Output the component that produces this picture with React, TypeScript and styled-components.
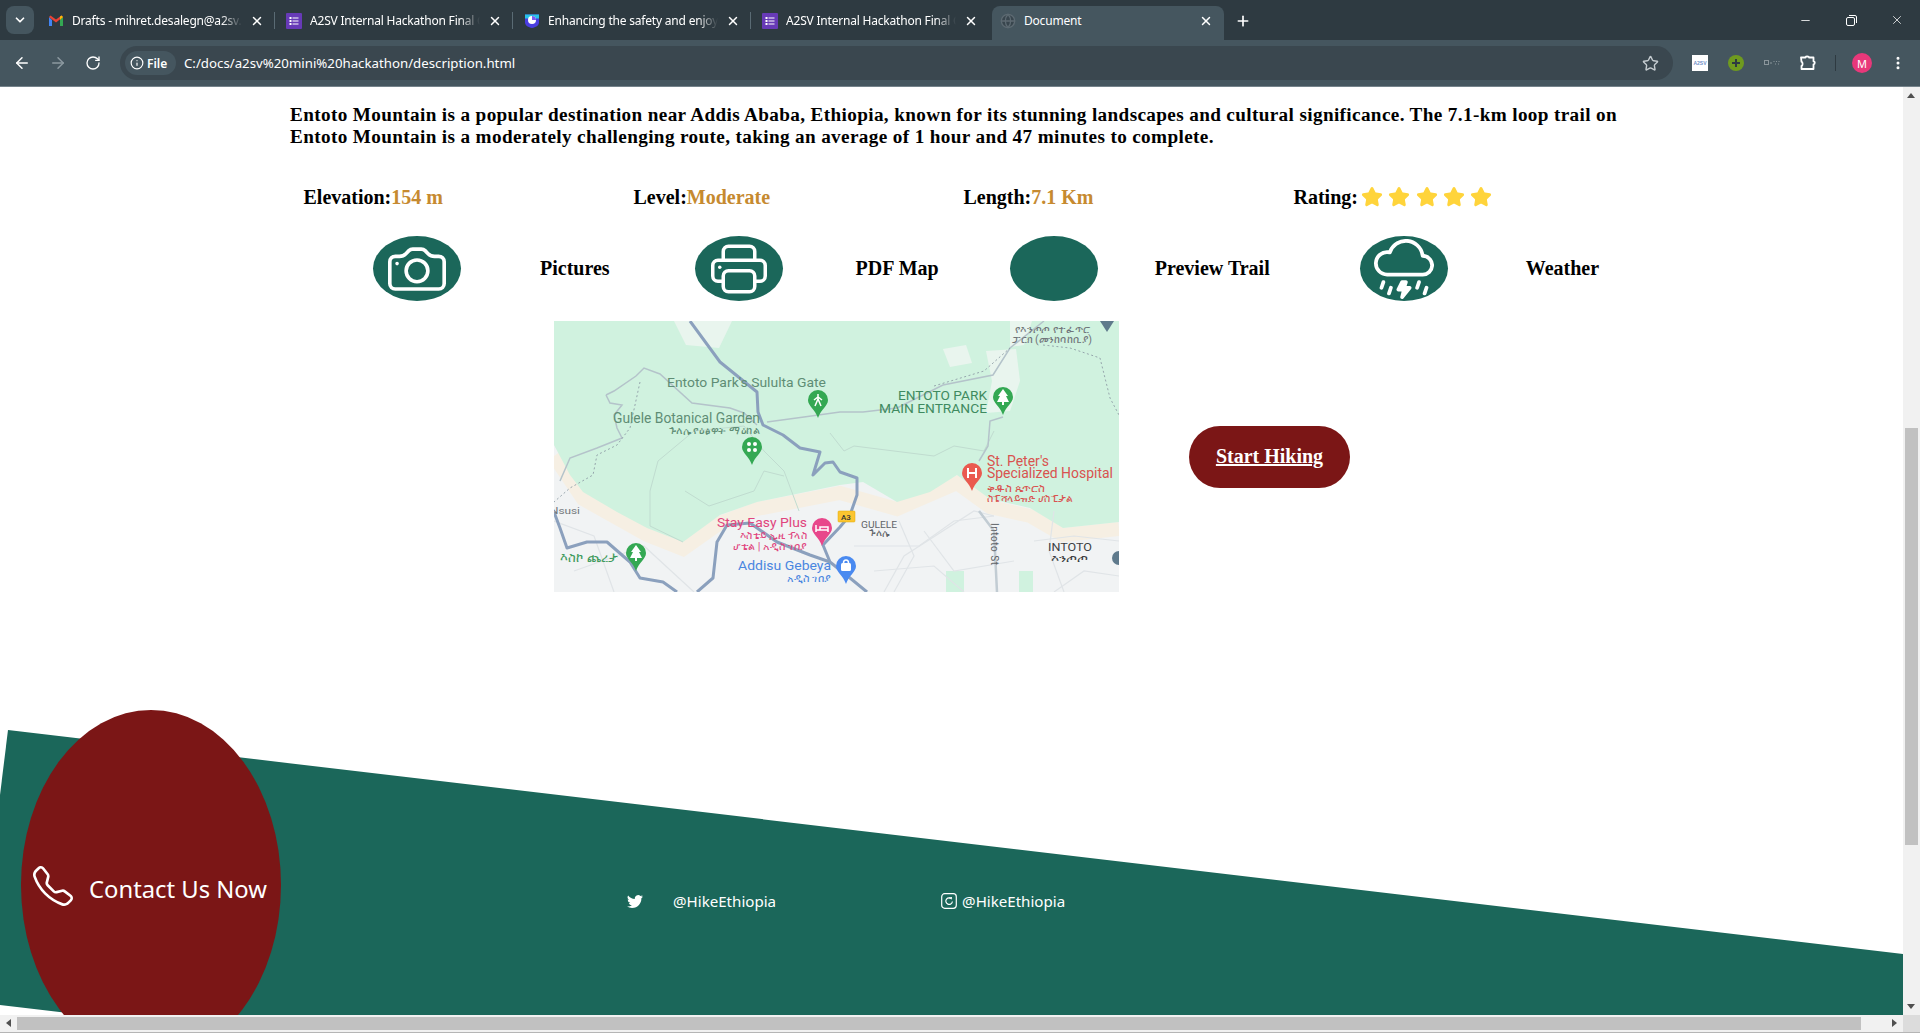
import React from "react";
import styled, { createGlobalStyle } from "styled-components";
import {
  BsCamera,
  BsPrinter,
  BsCloudLightningRain,
  BsTelephone,
  BsTwitter,
} from "react-icons/bs";
import {
  ArrowLeft,
  ArrowRight,
  RotateCw,
  Star,
  X,
  Plus,
  ChevronDown,
  Info,
  EllipsisVertical,
  Minus,
  Globe,
} from "lucide-react";

const Global = createGlobalStyle`
  html, body { margin: 0; padding: 0; height: 100%; overflow: hidden; background: #fff; }
  * { box-sizing: border-box; }
`;

const Window = styled.div`
  width: 1920px;
  height: 1033px;
  display: flex;
  flex-direction: column;
  overflow: hidden;
`;

/* ---------- browser chrome ---------- */
const TabStrip = styled.div`
  height: 40px;
  background: #2e3a41;
  display: flex;
  align-items: flex-end;
  padding-left: 6px;
  color: #fff;
  font: 12px "Noto Sans", sans-serif;
  letter-spacing: -0.2px;
`;
const TabMenu = styled.div`
  width: 28px;
  height: 28px;
  margin-bottom: 6px;
  margin-right: 3px;
  border-radius: 8px;
  background: #45565f;
  display: flex;
  align-items: center;
  justify-content: center;
`;
const Tab = styled.div<{ $active?: boolean; $sep?: boolean }>`
  position: relative;
  width: ${(p) => (p.$active ? 232 : 238)}px;
  height: 34px;
  margin-left: ${(p) => (p.$active ? 3 : 0)}px;
  padding: 0 11px 5px ${(p) => (p.$active ? 8 : 11)}px;
  display: flex;
  align-items: center;
  gap: 8px;
  border-radius: 8px 8px 0 0;
  background: ${(p) => (p.$active ? "#45565f" : "transparent")};
  &::after {
    content: "";
    display: ${(p) => (p.$sep ? "block" : "none")};
    position: absolute;
    right: 0;
    top: 6px;
    height: 17px;
    width: 1px;
    background: #5a6b74;
  }
`;
const TabTitle = styled.span<{ $fade?: boolean }>`
  flex: 1;
  white-space: nowrap;
  overflow: hidden;
  ${(p) =>
    p.$fade &&
    "mask-image: linear-gradient(to right, #000 88%, transparent 100%);"}
`;
const NewTab = styled.div`
  width: 38px;
  height: 34px;
  padding-bottom: 5px;
  display: flex;
  align-items: center;
  justify-content: center;
`;
const WindowControls = styled.div`
  margin-left: auto;
  height: 40px;
  display: flex;
  align-items: center;
`;
const WindowButton = styled.div`
  width: 46px;
  height: 40px;
  display: flex;
  align-items: center;
  justify-content: center;
`;
const Toolbar = styled.div`
  height: 47px;
  background: #45565f;
  border-bottom: 1px solid #75838b;
  display: flex;
  align-items: center;
  color: #fff;
  padding-left: 13px;
  font: 14px "Noto Sans", sans-serif;
`;
const NavButtons = styled.div`
  display: flex;
  align-items: center;
  gap: 18px;
  margin-right: 19px;
`;
const Omnibox = styled.div`
  width: 1553px;
  height: 34px;
  border-radius: 17px;
  background: #3a474f;
  display: flex;
  align-items: center;
  padding: 0 14px 0 5px;
`;
const FileChip = styled.div`
  width: 51px;
  height: 24px;
  border-radius: 12px;
  background: #45565f;
  display: flex;
  align-items: center;
  gap: 3px;
  padding-left: 5px;
  font-size: 12px;
  font-weight: 600;
  margin-right: 8px;
`;
const Url = styled.span`
  flex: 1;
  font-size: 13.25px;
`;
const ToolIcons = styled.div`
  display: flex;
  align-items: center;
  margin-left: 9px;
`;
const Ext = styled.div`
  width: 36px;
  display: flex;
  justify-content: center;
`;
const ExtSquare = styled.div`
  width: 16px;
  height: 16px;
  background: #fff;
  color: #6f8fc7;
  font: 700 5px "Liberation Sans", sans-serif;
  display: flex;
  align-items: center;
  justify-content: center;
`;
const Divider = styled.div`
  width: 1px;
  height: 16px;
  background: #2e3a41;
  margin: 0 16px 0 9px;
`;
const Avatar = styled.div`
  width: 20px;
  height: 20px;
  border-radius: 50%;
  background: #e8387a;
  color: #fff;
  font: 11px "Noto Sans", sans-serif;
  display: flex;
  align-items: center;
  justify-content: center;
  margin-right: 18px;
`;

/* ---------- page ---------- */
const Viewport = styled.div`
  flex: 1;
  display: flex;
  min-height: 0;
`;
const Page = styled.main`
  width: 1903px;
  background: #fff;
  overflow: hidden;
  font-family: "Liberation Serif", serif;
  font-weight: 700;
  color: #000;
`;
const Intro = styled.p`
  margin: 17px 0 0 290px;
  width: 1340px;
  font-size: 19.2px;
  line-height: 22px;
  letter-spacing: 0.36px;
`;
const Stats = styled.div`
  margin: 37px 0 0 303.5px;
  display: grid;
  grid-template-columns: repeat(4, 330px);
  font-size: 20px;
  line-height: 24px;
`;
const Stat = styled.div`
  display: flex;
  align-items: center;
  white-space: nowrap;
`;
const StatValue = styled.span`
  color: #c68a30;
`;
const Stars = styled.span`
  display: inline-flex;
  gap: 5.3px;
  margin-left: 3px;
`;
const Actions = styled.div`
  margin-top: 27px;
  display: flex;
  font-size: 20px;
`;
const Action = styled.div<{ $left: number; $gap: number }>`
  display: flex;
  align-items: center;
  gap: ${(p) => p.$gap}px;
  margin-left: ${(p) => p.$left}px;
`;
const IconDisc = styled.div`
  width: 88px;
  height: 65px;
  border-radius: 50%;
  background: #1b675a;
  color: #fff;
  display: flex;
  align-items: center;
  justify-content: center;
`;
const MapRow = styled.div`
  margin: 20px 0 0 554px;
  display: flex;
  align-items: center;
  gap: 70px;
`;
const MapFrame = styled.svg`
  display: block;
  width: 565px;
  height: 271px;
  font-weight: 400;
`;
const StartButton = styled.a`
  width: 161px;
  height: 62px;
  border-radius: 31px;
  background: #7b1616;
  color: #fff;
  font-size: 20px;
  text-decoration: underline;
  display: flex;
  align-items: center;
  justify-content: center;
`;
const Footer = styled.footer`
  position: relative;
  margin-top: 118px;
  height: 305px;
  overflow: hidden;
  color: #fff;
  font-family: "Noto Sans", sans-serif;
  font-weight: 400;
  padding: 179px 0 0 627px;
  display: flex;
  align-items: flex-start;
  gap: 165px;
`;
const FooterBand = styled.div`
  position: absolute;
  inset: 0;
  background: #1b675a;
  clip-path: polygon(8px 20px, 1903px 244px, 1903px 305px, 85px 305px, 0 295px, 0 85px);
`;
const ContactOval = styled.div`
  position: absolute;
  left: 21px;
  top: 0;
  width: 260px;
  height: 350px;
  border-radius: 50%;
  background: #7b1616;
  display: flex;
  align-items: center;
  gap: 16px;
  padding: 7px 0 0 12px;
  font-size: 23.8px;
  white-space: nowrap;
`;
const PhoneIcon = styled(BsTelephone)`
  margin-top: -6px;
`;
const Social = styled.div<{ $gap: number }>`
  position: relative;
  display: flex;
  align-items: center;
  gap: ${(p) => p.$gap}px;
  font-size: 15.1px;
  line-height: 24px;
`;

/* ---------- scrollbars ---------- */
const VScroll = styled.div`
  position: relative;
  width: 17px;
  background: #f1f1f1;
`;
const VThumb = styled.div`
  position: absolute;
  left: 2px;
  right: 2px;
  top: 341px;
  height: 417px;
  background: #c1c1c1;
`;
const Arrow = styled.div<{ $dir: "up" | "down" | "left" | "right" }>`
  position: absolute;
  width: 0;
  height: 0;
  ${(p) =>
    p.$dir === "up"
      ? "top: 6px; left: 4px; border: 4px solid transparent; border-top: 0; border-bottom: 5px solid #505050;"
      : p.$dir === "down"
      ? "bottom: 6px; left: 4px; border: 4px solid transparent; border-bottom: 0; border-top: 5px solid #505050;"
      : p.$dir === "left"
      ? "top: 4px; left: 6px; border: 4px solid transparent; border-left: 0; border-right: 5px solid #505050;"
      : "top: 4px; right: 23px; border: 4px solid transparent; border-right: 0; border-left: 5px solid #505050;"}
`;
const HScroll = styled.div`
  position: relative;
  height: 18px;
  background: #f1f1f1;
  border-bottom: 1px solid #b5b5b5;
`;
const HThumb = styled.div`
  position: absolute;
  left: 17px;
  top: 2px;
  bottom: 2px;
  width: 1844px;
  background: #c1c1c1;
`;
const Corner = styled.div`
  position: absolute;
  right: 0;
  top: 0;
  bottom: 0;
  width: 17px;
  background: #dcdcdc;
`;

/* ---------- small drawings ---------- */
const GmailIcon = () => (
  <svg width="16" height="16" viewBox="0 0 16 16">
    <path d="M1 4v9h3V7z" fill="#4285f4" />
    <path d="M12 7v6h3V4z" fill="#34a853" />
    <path d="M1 4l7 5.500L15 4l-1.500-1.500L8 6.500 2.500 2.500z" fill="#ea4335" />
    <path d="M12 3.600V7l3-3-1.500-1.500z" fill="#fbbc04" />
  </svg>
);
const FormsIcon = () => (
  <svg width="16" height="16" viewBox="0 0 16 16">
    <rect width="16" height="16" rx="1" fill="#673ab7" />
    <g fill="#fff">
      <rect x="3.500" y="4" width="2" height="2" />
      <rect x="3.500" y="7" width="2" height="2" />
      <rect x="3.500" y="10" width="2" height="2" />
      <rect x="6.500" y="4.500" width="6" height="1" />
      <rect x="6.500" y="7.500" width="6" height="1" />
      <rect x="6.500" y="10.500" width="6" height="1" />
    </g>
  </svg>
);
const ShieldIcon = () => (
  <svg width="16" height="16" viewBox="0 0 16 16">
    <path d="M1 1.500h14v8c0 3-3.500 5-7 5.500-3.500-.5-7-2.500-7-5.500z" fill="#4a3de0" />
    <path d="M1 1.500h14v4H1z" fill="#27c4e8" />
    <circle cx="8" cy="7" r="4" fill="#fff" />
    <path d="M8 7V3a4 4 0 0 1 4 4z" fill="#7a5cf0" />
  </svg>
);
const ExtensionsIcon = () => (
  <svg width="18" height="18" viewBox="0 0 18 18" fill="none" stroke="#fff" strokeWidth="1.800" strokeLinejoin="round">
    <path d="M2 3.500h4.500c0-1.500 3.500-1.500 3.500 0h4.500v3.800c1.700 0 1.700 3 0 3V15H2.500v-3.200c1.400 0 1.400-4 0-4z" />
  </svg>
);
const InstagramIcon = () => (
  <svg width="16" height="16" viewBox="0 0 16 16" fill="none" stroke="#fff" strokeWidth="1.200">
    <rect x="0.700" y="0.700" width="14.600" height="14.600" rx="3" />
    <path d="M10.800 6.200A3.300 3.300 0 1 0 11.400 8.500" />
    <path d="M8 5l3-.3" />
  </svg>
);

const Pin = ({
  x,
  y,
  color,
  r = 10,
  children,
}: {
  x: number;
  y: number;
  color: string;
  r?: number;
  children?: React.ReactNode;
}) => (
  <g transform={`translate(${x} ${y})`}>
    <path
      d={`M${-r} 0a${r} ${r} 0 1 1 ${2 * r} 0c0 ${r * 0.6} ${-r * 0.7} ${r * 0.9} ${-r} ${r * 1.8}c${-r * 0.3} ${-r * 0.9} ${-r} ${-r * 1.2} ${-r} ${-r * 1.8}z`}
      fill={color}
    />
    {children}
  </g>
);

type Label = { t: string; x: number; y: number; w: number; s: number; c: string };
const labels: Label[] = [
  { t: "Entoto Park's Sululta Gate", x: 113, y: 66, w: 159, s: 13.5, c: "#5f8d75" },
  { t: "Gulele Botanical Garden", x: 59, y: 102, w: 147, s: 14, c: "#5f8d75" },
  { t: "ጉለሌ የዕፅዋት ማዕከል", x: 115, y: 113, w: 91, s: 10, c: "#5f8d75" },
  { t: "Nsusi", x: -4, y: 193, w: 30, s: 9, c: "#70757a" },
  { t: "እስኮ ጨረታ", x: 6, y: 241, w: 58, s: 13, c: "#3f9a5c" },
  { t: "Stay Easy Plus", x: 163, y: 206, w: 90, s: 13.5, c: "#e0457e" },
  { t: "እስቴይ ኢዚ ፕላስ", x: 186, y: 218, w: 67, s: 10, c: "#e0457e" },
  { t: "ሆቴል | አዲስ ገበያ", x: 179, y: 229, w: 74, s: 10, c: "#e0457e" },
  { t: "Addisu Gebeya", x: 184, y: 249, w: 93, s: 13.5, c: "#4a86e0" },
  { t: "አዲስ ገበያ", x: 233, y: 261, w: 44, s: 10, c: "#4a86e0" },
  { t: "ENTOTO PARK", x: 344, y: 79, w: 89, s: 13, c: "#3f8a60" },
  { t: "MAIN ENTRANCE", x: 325, y: 92, w: 108, s: 13, c: "#3f8a60" },
  { t: "St. Peter's", x: 433, y: 145, w: 62, s: 14, c: "#d9534f" },
  { t: "Specialized Hospital", x: 433, y: 157, w: 126, s: 14, c: "#d9534f" },
  { t: "ቅዱስ ጴጥሮስ", x: 433, y: 171, w: 58, s: 10, c: "#d9534f" },
  { t: "ስፔሻላይዝድ ሆስፒታል", x: 433, y: 181, w: 85, s: 10, c: "#d9534f" },
  { t: "GULELE", x: 307, y: 207, w: 36, s: 9, c: "#5f6368" },
  { t: "ጉለሌ", x: 315, y: 215, w: 21, s: 9, c: "#5f6368" },
  { t: "INTOTO", x: 494, y: 230, w: 44, s: 10, c: "#3c4043" },
  { t: "እንጦጦ", x: 497, y: 241, w: 37, s: 10, c: "#3c4043" },
  { t: "የእንጦጦ የተፈጥሮ", x: 461, y: 12, w: 76, s: 10, c: "#70757a" },
  { t: "ፓርክ (መንከባከቢያ)", x: 458, y: 22, w: 80, s: 10, c: "#70757a" },
];

const greenArea =
  "0,0 565,0 565,201 509,207 476,187 436,178 403,154 376,171 343,181 309,161 286,164 203,181 166,194 129,221 93,207 63,191 29,171 16,154 0,124";

const MapDrawing = () => (
  <MapFrame viewBox="0 0 565 271">
    <rect width="565" height="271" fill="#f1f3f4" />
    <polyline
      points="0,135 29,178 93,214 129,228 166,202 203,188 286,172 343,188 403,162 436,186 476,195 509,214 565,208"
      fill="none"
      stroke="#f6efe3"
      strokeWidth="14"
    />
    <polygon points={greenArea} fill="#d0f2df" />
    <g fill="#e9f5ee">
      <polygon points="120,0 178,0 165,27 132,24" />
      <polygon points="389,28 412,24 418,42 396,46" />
      <polygon points="432,30 462,28 466,60 456,90 432,92 438,60" />
      <polygon points="456,0 478,0 470,24 456,26" />
    </g>
    <rect x="392" y="250" width="18" height="21" fill="#d0f2df" />
    <rect x="465" y="250" width="14" height="21" fill="#d0f2df" />
    <g fill="none" stroke="#e0e4e7" strokeWidth="1.200">
      <polyline points="0,200 40,215 60,271" />
      <polyline points="20,250 90,225 140,271" />
      <polyline points="300,225 365,225 400,200 440,195" />
      <polyline points="330,271 350,235 420,190 440,195" />
      <polyline points="480,220 520,215 565,220" />
      <polyline points="370,210 400,250 460,240" />
      <polyline points="500,271 530,250 565,255" />
      <polyline points="320,250 380,245 410,271" />
      <polyline points="345,200 360,235 340,271" />
      <polyline points="500,190 495,230 510,271" />
    </g>
    <g fill="none" stroke="#c0dcd0" strokeWidth="1">
      <polyline points="129,221 96,205 96,170 104,140 140,110 190,105 210,130 230,150 245,190" />
      <polyline points="131,170 155,185 200,170 210,150 230,155" />
      <polyline points="300,125 340,130 380,135 400,125 430,130 440,110" />
      <polyline points="276,112 290,130 300,125" />
    </g>
    <g fill="none" stroke="#b4c3ca" strokeWidth="1.500">
      <polyline points="52,74 60,70 82,55 90,47 106,53 138,82 176,87 190,92 203,104" />
      <polyline points="52,74 56,82 68,84 60,94 63,107 68,117 43,127 16,137 6,160" />
      <polyline points="213,101 250,96 286,91 309,91 343,87 389,64 439,54 456,27 490,0" />
      <polyline points="449,96 436,100 434,125 425,140" />
    </g>
    <g fill="none" stroke="#8f9da6" strokeWidth="0.900" strokeDasharray="2 2.500">
      <polyline points="86,61 76,107 63,124 43,134 39,154 16,167 0,181" />
      <polyline points="489,24 516,27 546,37 556,77 565,94" />
      <polyline points="380,65 430,50 456,27" />
    </g>
    <polyline points="425,190 440,210 443,271" fill="none" stroke="#c2ccd3" strokeWidth="2.500" />
    <g fill="none" stroke="#8ba0bd" strokeWidth="3" strokeLinejoin="round">
      <polyline points="136,0 166,41 203,71 204,91 209,104 229,114 246,127 266,131 259,154 271,142 279,141 286,151 303,157 303,174 296,194 286,206 269,224 276,241 296,257 313,271" />
      <polyline points="0,191 6,207 13,227 33,221 53,221 76,241 86,257 109,261 123,271" />
      <polyline points="143,271 159,257 163,221 173,204 196,202 223,221 256,234 276,241" />
    </g>
    <rect x="284" y="190" width="17" height="11" rx="1" fill="#fbc531" stroke="#e0a800" strokeWidth="0.500" />
    <text x="287" y="199" fontFamily="Roboto, sans-serif" fontSize="8" fontWeight="500" fill="#333">A3</text>
    <g fontFamily="Roboto, 'Noto Sans', sans-serif">
      {labels.map((l) => (
        <text key={l.t} x={l.x} y={l.y} fontSize={l.s} fill={l.c} textLength={l.w} lengthAdjust="spacingAndGlyphs">
          {l.t}
        </text>
      ))}
      <text transform="translate(437 202) rotate(90)" fontSize="10" fill="#5f6368" textLength="42">Intoto St</text>
    </g>
    <Pin x={264} y={79} color="#34a853">
      <path d="M-3 6L0-1 3 6M0-6v7M-4 0l4-3 4 3" stroke="#fff" strokeWidth="1.500" fill="none" />
    </Pin>
    <Pin x={198} y={126} color="#34a853">
      <g fill="#fff">
        <circle cx="-3" cy="-3" r="2" />
        <circle cx="3" cy="-3" r="2" />
        <circle cx="-3" cy="3" r="2" />
        <circle cx="3" cy="3" r="2" />
      </g>
    </Pin>
    <Pin x={82} y={232} color="#34a853">
      <path d="M0-8L5-1H3L6 5H1V8H-1V5H-6L-3-1H-5z" fill="#fff" />
    </Pin>
    <Pin x={449} y={76} color="#34a853">
      <path d="M0-8L5-1H3L6 5H1V8H-1V5H-6L-3-1H-5z" fill="#fff" />
    </Pin>
    <Pin x={418} y={152} color="#ea5a4f">
      <path d="M-4-5V5M4-5V5M-4 0H4" stroke="#fff" strokeWidth="2" fill="none" />
    </Pin>
    <Pin x={268} y={207} color="#e8478b">
      <path d="M-6-3V4M-6 2H6V4M6 2V-1H-2V2" stroke="#fff" strokeWidth="1.500" fill="none" />
    </Pin>
    <Pin x={292} y={245} color="#4a8af0">
      <rect x="-5" y="-3" width="10" height="8" rx="1.500" fill="#fff" />
      <path d="M-2.500-3a2.500 3 0 0 1 5 0" stroke="#fff" strokeWidth="1.500" fill="none" />
    </Pin>
    <polygon points="546,0 560,0 553,11" fill="#5f7a8c" />
    <circle cx="565" cy="237" r="7" fill="#5f7a8c" />
  </MapFrame>
);

const tabs = [
  { icon: <GmailIcon />, title: "Drafts - mihret.desalegn@a2sv.org - A2SV Mail" },
  { icon: <FormsIcon />, title: "A2SV Internal Hackathon Final Google Form" },
  { icon: <ShieldIcon />, title: "Enhancing the safety and enjoyment of hikers" },
  { icon: <FormsIcon />, title: "A2SV Internal Hackathon Final Google Form" },
];

const stats = [
  { k: "Elevation:", v: "154 m" },
  { k: "Level:", v: "Moderate" },
  { k: "Length:", v: "7.1 Km" },
];

const actions = [
  { left: 373, gap: 79, icon: <BsCamera size={58} />, label: "Pictures" },
  { left: 85, gap: 73, icon: <BsPrinter size={56} />, label: "PDF Map" },
  { left: 71, gap: 57, icon: null, label: "Preview Trail" },
  { left: 90, gap: 78, icon: <BsCloudLightningRain size={60} />, label: "Weather" },
];

export default function App() {
  return (
    <Window>
      <Global />
      <TabStrip>
        <TabMenu>
          <ChevronDown size={14} strokeWidth={3} />
        </TabMenu>
        {tabs.map((t, i) => (
          <Tab key={i} $sep={i < 3}>
            {t.icon}
            <TabTitle $fade>{t.title}</TabTitle>
            <X size={14} strokeWidth={2.5} />
          </Tab>
        ))}
        <Tab $active>
          <Globe size={16} color="#5d6a72" fill="#38454d" />
          <TabTitle>Document</TabTitle>
          <X size={14} strokeWidth={2.5} />
        </Tab>
        <NewTab>
          <Plus size={16} strokeWidth={2.5} />
        </NewTab>
        <WindowControls>
          <WindowButton>
            <Minus size={13} strokeWidth={1.5} />
          </WindowButton>
          <WindowButton>
            <svg width="11" height="11" viewBox="0 0 11 11" fill="none" stroke="#fff">
              <rect x="0.500" y="2.500" width="8" height="8" rx="1.500" />
              <path d="M3 .5h6a1.500 1.500 0 0 1 1.500 1.500v6" />
            </svg>
          </WindowButton>
          <WindowButton>
            <X size={14} strokeWidth={1.3} />
          </WindowButton>
        </WindowControls>
      </TabStrip>
      <Toolbar>
        <NavButtons>
          <ArrowLeft size={18} strokeWidth={2} />
          <ArrowRight size={18} strokeWidth={2} color="#8c99a0" />
          <RotateCw size={16} strokeWidth={2} />
        </NavButtons>
        <Omnibox>
          <FileChip>
            <Info size={14} strokeWidth={2} />
            File
          </FileChip>
          <Url>C:/docs/a2sv%20mini%20hackathon/description.html</Url>
          <Star size={17} strokeWidth={2} color="#c4cbcf" />
        </Omnibox>
        <ToolIcons>
          <Ext>
            <ExtSquare>A2SV</ExtSquare>
          </Ext>
          <Ext>
            <svg width="16" height="16" viewBox="0 0 16 16">
              <circle cx="8" cy="8" r="8" fill="#6f9a1f" />
              <path d="M8 4v8M4 8h8" stroke="#2e3a41" strokeWidth="2" />
            </svg>
          </Ext>
          <Ext>
            <svg width="16" height="6" viewBox="0 0 16 6">
              <rect x="0.500" y="0.500" width="4" height="4" fill="none" stroke="#8b969c" />
              <path d="M6 3h2M9.500 1.500h1M12 1.500h1M14.500 1.500h1M11 4h1M14 4h1" stroke="#8b969c" />
            </svg>
          </Ext>
          <Ext>
            <ExtensionsIcon />
          </Ext>
          <Divider />
          <Avatar>M</Avatar>
          <EllipsisVertical size={16} strokeWidth={2.5} />
        </ToolIcons>
      </Toolbar>
      <Viewport>
        <Page>
          <Intro>
            Entoto Mountain is a popular destination near Addis Ababa, Ethiopia, known for its stunning landscapes and cultural significance. The 7.1-km loop trail on Entoto Mountain is a moderately challenging route, taking an average of 1 hour and 47 minutes to complete.
          </Intro>
          <Stats>
            {stats.map((s) => (
              <Stat key={s.k}>
                {s.k}
                <StatValue>{s.v}</StatValue>
              </Stat>
            ))}
            <Stat>
              Rating:
              <Stars>
                {[0, 1, 2, 3, 4].map((i) => (
                  <Star key={i} size={22} color="#ffd43b" fill="#ffd43b" strokeWidth={2} />
                ))}
              </Stars>
            </Stat>
          </Stats>
          <Actions>
            {actions.map((a) => (
              <Action key={a.label} $left={a.left} $gap={a.gap}>
                <IconDisc>{a.icon}</IconDisc>
                {a.label}
              </Action>
            ))}
          </Actions>
          <MapRow>
            <MapDrawing />
            <StartButton>Start Hiking</StartButton>
          </MapRow>
          <Footer>
            <FooterBand />
            <Social $gap={30}>
              <BsTwitter size={16} />
              @HikeEthiopia
            </Social>
            <Social $gap={5}>
              <InstagramIcon />
              @HikeEthiopia
            </Social>
            <ContactOval>
              <PhoneIcon size={40} />
              Contact Us Now
            </ContactOval>
          </Footer>
        </Page>
        <VScroll>
          <Arrow $dir="up" />
          <VThumb />
          <Arrow $dir="down" />
        </VScroll>
      </Viewport>
      <HScroll>
        <Arrow $dir="left" />
        <HThumb />
        <Arrow $dir="right" />
        <Corner />
      </HScroll>
    </Window>
  );
}
